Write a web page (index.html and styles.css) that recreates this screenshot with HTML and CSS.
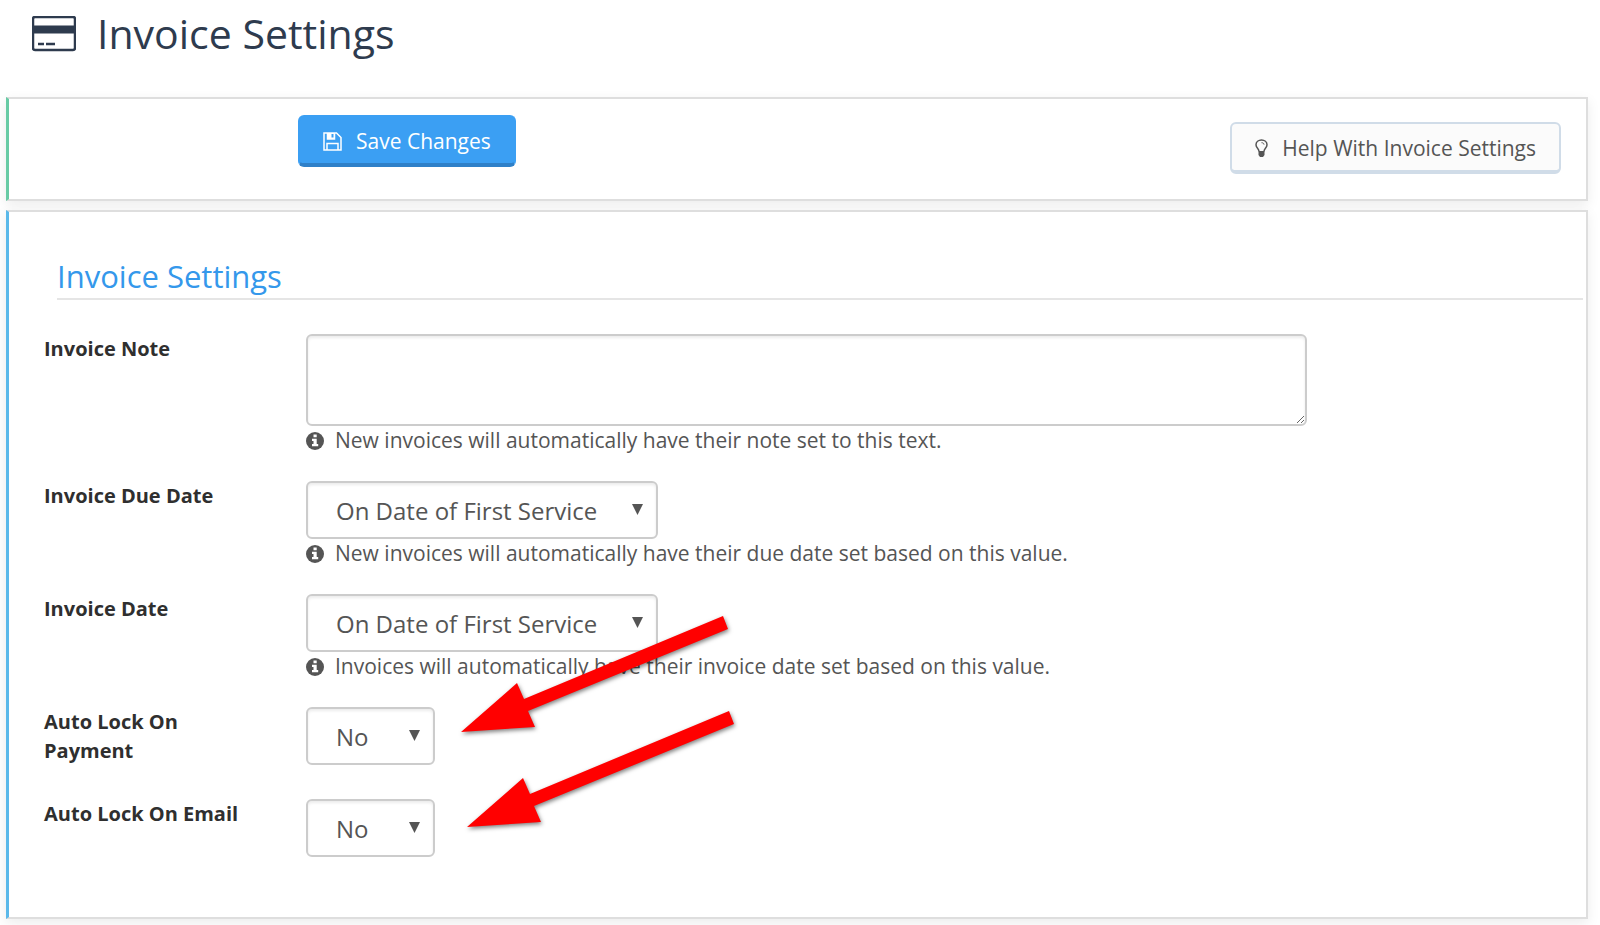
FILE: index.html
```html
<!DOCTYPE html>
<html lang="en">
<head>
    <meta charset="UTF-8">
    <meta name="viewport" content="width=device-width, initial-scale=1.0">
    <title>Invoice Settings</title>
    <link rel="stylesheet" href="styles.css">
</head>
<body>
    <header class="page-header">
        <svg class="card-icon" width="44" height="36" viewBox="0 0 44 36" aria-hidden="true">
            <rect x="1" y="1" width="42" height="33" rx="2" fill="none" stroke="currentColor" stroke-width="2.500"/>
            <path d="M1 9.500h42v8h-42z" fill="currentColor"/>
            <path d="M6 28h6M14 28h9" stroke="currentColor" stroke-width="2.500"/>
        </svg>
        <h1>Invoice Settings</h1>
    </header>

    <form>
        <div class="panel toolbar">
            <button type="submit" class="btn btn-primary">
                <svg width="19" height="19" viewBox="0 0 19 19" fill="none" stroke="currentColor" stroke-width="1.500" aria-hidden="true">
                    <path d="M1 1h12.500l4.500 4.500v12.500h-17z"/>
                    <path d="M4.500 1v6h7v-6" fill="currentColor"/>
                    <path d="M8.500 2h2v3.500h-2z" fill="#3b9ff3" stroke="none"/>
                    <path d="M4 18v-6.500h11v6.500"/>
                </svg>
                Save Changes
            </button>
            <a href="#" class="btn btn-default">
                <svg width="13" height="19" viewBox="0 0 13 19" fill="none" stroke="currentColor" stroke-width="1.500" aria-hidden="true">
                    <path d="M4 12.500C4 9.500 1 9 1 5.700C1 3 3.500 1 6.500 1S12 3 12 5.700C12 9 9 9.500 9 12.500"/>
                    <path d="M6.500 3.700c1.600 0 2.500.8 2.500 1.900" stroke-width="1"/>
                    <path d="M3.500 12h6v4l-1.500 2h-3l-1.500-2z" fill="currentColor" stroke="none"/>
                </svg>
                Help With Invoice Settings
            </a>
        </div>

        <div class="panel settings">
            <h2>Invoice Settings</h2>

            <div class="form-group">
                <label for="note">Invoice Note</label>
                <div class="field">
                    <textarea id="note" class="control"></textarea>
                    <p class="help">
                        <svg class="info-icon" viewBox="0 0 18 18" aria-hidden="true"><circle cx="9" cy="9" r="9"/><path d="M7.500 2.500h3.200v2.700h-3.200zM6 6.700h4.700v5.300h1.500v2.300h-6.200v-2.300h1.500v-3h-1.500z" fill="#fff"/></svg>
                        New invoices will automatically have their note set to this text.
                    </p>
                </div>
            </div>

            <div class="form-group">
                <label for="due-date">Invoice Due Date</label>
                <div class="field">
                    <div class="select">
                        <select id="due-date" class="control">
                            <option>On Date of First Service</option>
                        </select>
                    </div>
                    <p class="help">
                        <svg class="info-icon" viewBox="0 0 18 18" aria-hidden="true"><circle cx="9" cy="9" r="9"/><path d="M7.500 2.500h3.200v2.700h-3.200zM6 6.700h4.700v5.300h1.500v2.300h-6.200v-2.300h1.500v-3h-1.500z" fill="#fff"/></svg>
                        New invoices will automatically have their due date set based on this value.
                    </p>
                </div>
            </div>

            <div class="form-group">
                <label for="invoice-date">Invoice Date</label>
                <div class="field">
                    <div class="select">
                        <select id="invoice-date" class="control">
                            <option>On Date of First Service</option>
                        </select>
                    </div>
                    <p class="help">
                        <svg class="info-icon" viewBox="0 0 18 18" aria-hidden="true"><circle cx="9" cy="9" r="9"/><path d="M7.500 2.500h3.200v2.700h-3.200zM6 6.700h4.700v5.300h1.500v2.300h-6.200v-2.300h1.500v-3h-1.500z" fill="#fff"/></svg>
                        Invoices will automatically have their invoice date set based on this value.
                    </p>
                </div>
            </div>

            <div class="form-group">
                <label for="lock-payment">Auto Lock On Payment</label>
                <div class="field">
                    <div class="select">
                        <select id="lock-payment" class="control">
                            <option>No</option>
                        </select>
                    </div>
                    <svg class="arrow" width="280" height="130" viewBox="0 0 280 130" aria-hidden="true">
                        <path d="M5 122L61 73L68 89L267 6L272 19L72 101L79 117Z"/>
                    </svg>
                </div>
            </div>

            <div class="form-group">
                <label for="lock-email">Auto Lock On Email</label>
                <div class="field">
                    <div class="select">
                        <select id="lock-email" class="control">
                            <option>No</option>
                        </select>
                    </div>
                    <svg class="arrow arrow-email" width="280" height="130" viewBox="0 0 280 130" aria-hidden="true">
                        <path d="M5 122L61 73L68 89L267 6L272 19L72 101L79 117Z"/>
                    </svg>
                </div>
            </div>
        </div>
    </form>
</body>
</html>
```
FILE: styles.css
```css
* {
    margin: 0;
    padding: 0;
    box-sizing: border-box;
}

body {
    padding: 0 12px 7px 6px;
    background: #fff;
    color: #555;
    font-family: 'Open Sans', sans-serif;
    font-size: 20px;
    line-height: 29px;
}

.page-header {
    display: flex;
    align-items: center;
    gap: 21px;
    padding: 6px 26px 36px;
    color: #2e3b4e;
}

h1 {
    font-size: 41px;
    font-weight: 400;
    line-height: 55px;
}

.panel {
    border: 2px solid #dedede;
    border-left: 3px solid #5bb9ea;
    background: #fff;
    box-shadow: 0 4px 12px rgba(0, 0, 0, 0.08);
}

.toolbar {
    display: flex;
    justify-content: space-between;
    align-items: flex-start;
    margin-bottom: 9px;
    padding: 16px 25px 25px 289px;
    border-left-color: #68cba5;
}

.btn {
    display: flex;
    align-items: center;
    gap: 14px;
    height: 52px;
    padding: 2px 23px 0;
    border: 2px solid #3b9ff3;
    border-bottom: 4px solid #2f80c8;
    border-radius: 6px;
    font: inherit;
    font-size: 21px;
    text-decoration: none;
    cursor: pointer;
}

.btn-primary {
    background: #3b9ff3;
    color: #fff;
}

.btn-default {
    margin-top: 7px;
    border-color: #d0dce8;
    background: #fbfbfb;
    color: #555;
}

.settings {
    padding: 45px 3px 34px 35px;
}

h2 {
    margin: 0 0 34px 13px;
    padding-bottom: 3px;
    border-bottom: 2px solid #e5e5e5;
    color: #3498eb;
    font-size: 31px;
    font-weight: 400;
    line-height: 38px;
}

.form-group {
    display: flex;
    margin-bottom: 26px;
}

label {
    flex: 0 0 262px;
    padding: 0 40px 8px 0;
    color: #2f2f2f;
    font-weight: 700;
}

.field {
    position: relative;
    flex: 1;
}

.control {
    display: block;
    border: 2px solid #ccc;
    border-radius: 6px;
    background: #fff;
    box-shadow: inset 0 2px 3px rgba(0, 0, 0, 0.08);
    color: #555;
    font-family: inherit;
    font-size: 24px;
}

textarea.control {
    width: 78.4%;
    height: 92px;
    padding: 8px 28px;
    resize: both;
}

.select {
    position: relative;
    width: fit-content;
}

select.control {
    min-width: 129px;
    height: 58px;
    padding: 0 58px 0 28px;
    appearance: none;
}

.select::after {
    content: "";
    position: absolute;
    top: 23px;
    right: 15px;
    width: 11px;
    height: 11px;
    background: #555;
    clip-path: polygon(0 0, 100% 0, 50% 100%);
    pointer-events: none;
}

.help {
    display: flex;
    align-items: center;
    gap: 11px;
    font-size: 21px;
}

.info-icon {
    width: 18px;
    height: 18px;
    fill: #555;
}

/* callout arrows lie over the form */
.arrow {
    position: absolute;
    top: -97px;
    left: 150px;
    fill: #f00;
    filter: drop-shadow(1px 2px 2px rgba(0, 0, 0, 0.5));
    pointer-events: none;
}

.arrow-email {
    top: -94px;
    left: 156px;
}
```
